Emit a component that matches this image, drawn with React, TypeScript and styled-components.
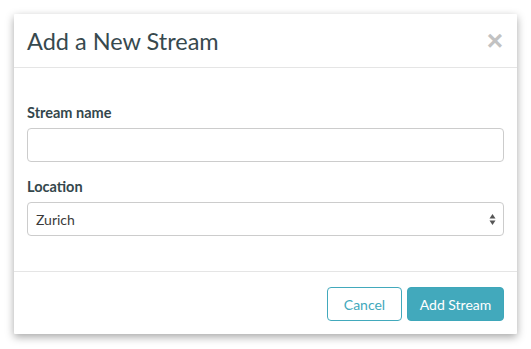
import styled, { createGlobalStyle } from "styled-components";

const GlobalStyle = createGlobalStyle`
  body {
    margin: 0;
    padding: 14px;
    background: #ffffff;
    font-family: "Lato", "Open Sans", sans-serif;
    color: #34474c;
  }
  * {
    box-sizing: border-box;
  }
`;

const Modal = styled.div`
  width: 503px;
  background: #ffffff;
  box-shadow: 0 3px 9px rgba(0, 0, 0, 0.35);
  border-radius: 1px;
`;

const Header = styled.div`
  display: flex;
  align-items: center;
  justify-content: space-between;
  height: 54px;
  padding: 0 14px 0 13px;
  border-bottom: 1px solid #e5e5e5;
`;

const Title = styled.h4`
  margin: 0;
  font-size: 23.5px;
  font-weight: 400;
  color: #37494e;
`;

const Close = styled.button`
  border: 0;
  background: none;
  padding: 0;
  margin-top: 1px;
  font-size: 28px;
  font-weight: 700;
  line-height: 1;
  color: #c2c2c2;
  font-family: "Liberation Sans", sans-serif;
  cursor: pointer;
`;

const Body = styled.div`
  display: flex;
  flex-direction: column;
  padding: 35px 13px 35px 13px;
`;

const Label = styled.label<{ first?: boolean }>`
  display: block;
  margin-top: ${(p) => (p.first ? "0" : "15px")};
  margin-bottom: 5px;
  font-size: 14.5px;
  font-weight: 700;
  line-height: 20px;
  color: #34474c;
`;

const Input = styled.input`
  width: 100%;
  height: 34px;
  border: 1px solid #cccccc;
  border-radius: 4px;
  padding: 6px 8px;
  font: inherit;
  font-size: 14px;
`;

const SelectBox = styled.div`
  display: flex;
  align-items: center;
  justify-content: space-between;
  width: 100%;
  height: 34px;
  border: 1px solid #cccccc;
  border-radius: 4px;
  padding: 0 7px 0 8px;
  font-size: 14px;
  color: #3a3a3a;
`;

const Footer = styled.div`
  display: flex;
  justify-content: flex-end;
  gap: 5px;
  padding: 15px 13px 13px;
  border-top: 1px solid #e5e5e5;
`;

const Button = styled.button<{ primary?: boolean }>`
  height: 34px;
  width: ${(p) => (p.primary ? "97px" : "75px")};
  padding: 0;
  border-radius: 4px;
  border: 1px solid ${(p) => (p.primary ? "#3ea7ba" : "#42a9bc")};
  background: ${(p) => (p.primary ? "#42a9bc" : "#ffffff")};
  color: ${(p) => (p.primary ? "#ffffff" : "#42a9bc")};
  font-family: "Lato", "Open Sans", sans-serif;
  font-size: 14px;
  cursor: pointer;
`;

const Arrows = () => (
  <svg width="7" height="13" viewBox="0 0 7 13">
    <path d="M3.5 1 L6.5 5.5 L0.5 5.5 Z" fill="#555" />
    <path d="M3.5 12 L6.5 7.5 L0.5 7.5 Z" fill="#555" />
  </svg>
);

export default function App() {
  return (
    <>
      <GlobalStyle />
      <Modal>
        <Header>
          <Title>Add a New Stream</Title>
          <Close aria-label="Close">×</Close>
        </Header>
        <Body>
          <Label first>Stream name</Label>
          <Input type="text" />
          <Label>Location</Label>
          <SelectBox>
            <span>Zurich</span>
            <Arrows />
          </SelectBox>
        </Body>
        <Footer>
          <Button>Cancel</Button>
          <Button primary>Add Stream</Button>
        </Footer>
      </Modal>
    </>
  );
}
